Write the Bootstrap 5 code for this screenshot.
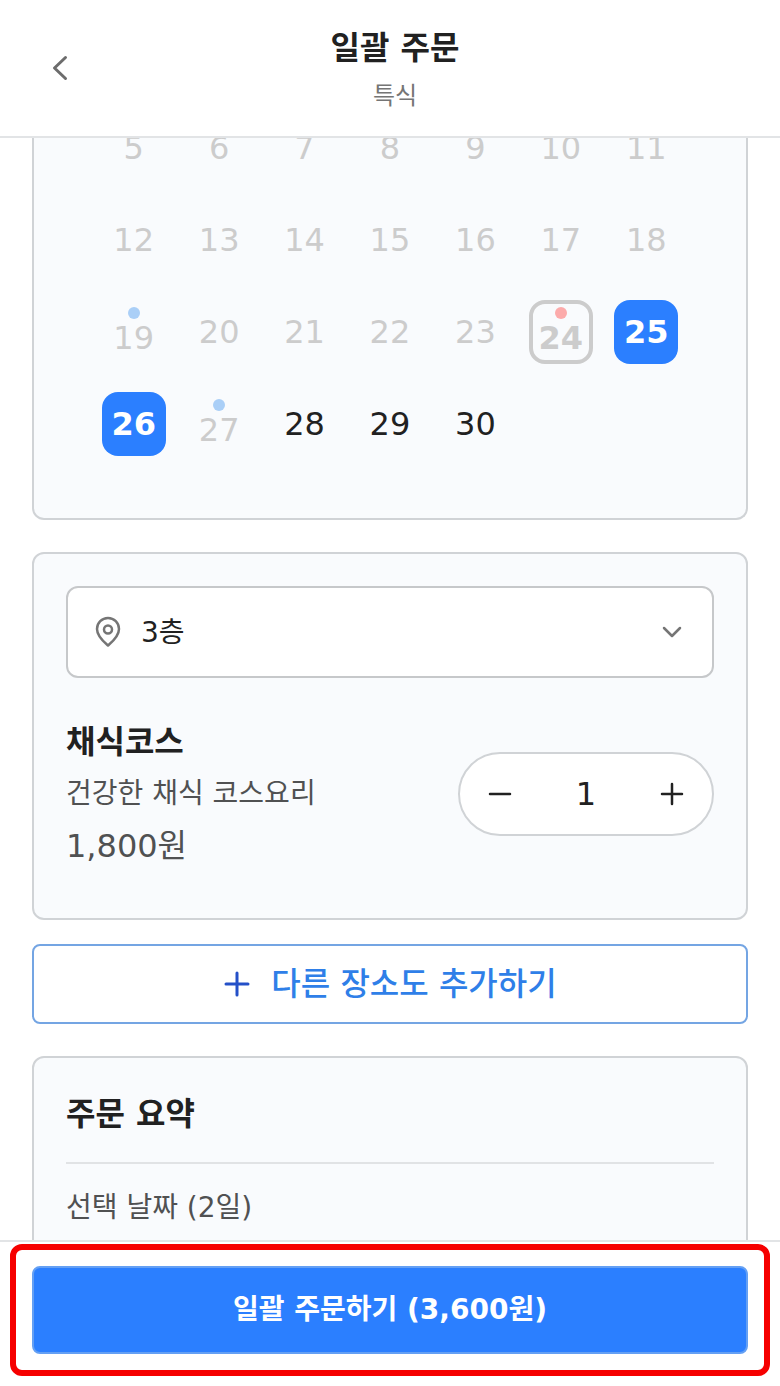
<!DOCTYPE html>
<html lang="ko">
<head>
<meta charset="utf-8">
<meta name="viewport" content="width=device-width, initial-scale=1">
<title>일괄 주문</title>
<link href="https://cdn.jsdelivr.net/npm/bootstrap@5.3.0/dist/css/bootstrap.min.css" rel="stylesheet">
<style>
  body { font-family: "DejaVu Sans", "Noto Sans CJK KR", sans-serif; color: #212121; background: #fff; }
  h1, h2, h3, p { margin: 0; }
  svg { fill: none; stroke: currentColor; stroke-linecap: round; stroke-linejoin: round; flex: none; }
  .t-24 { font-size: 24px; }
  .t-28 { font-size: 28px; }
  .t-32 { font-size: 32px; }
  .lh-row { line-height: 52px; }
  .c-sub { color: #757575; }
  .c-body { color: #505152; }

  .app-header { border-bottom: 2px solid #e2e4e6; padding: 0 30px 0 40px; height: 138px; }
  .app-header h1, .app-header p { line-height: 48px; }
  .titles { padding-top: 8px; }
  .icon-btn { width: 40px; height: 40px; padding: 0; border: 0; background: none; color: #212121; display: flex; align-items: center; justify-content: center; }
  .back-btn { color: #6c6c6c; }

  .app-main { overflow: hidden; min-height: 0; padding: 0 32px; }
  .panel { background: #f9fbfd; border: 2px solid #d0d3d6; border-radius: 12px; padding: 32px; }
  .section-gap { margin-top: 32px; }
  /* the calendar is scrolled partly under the header */
  .calendar { margin-top: -36px; border-top: 0; padding: 0 57px 48px; }
  .calendar table { width: 100%; table-layout: fixed; }
  .calendar td { height: 92px; padding: 0; text-align: center; vertical-align: middle; }
  .day { width: 64px; height: 64px; padding: 0; border: 0; border-radius: 16px; background: none; color: #212121; font-size: 32px; line-height: 38px; display: inline-flex; flex-direction: column; align-items: center; justify-content: center; vertical-align: middle; }
  .day:disabled { color: #ccc; }
  .day.today { border: 4px solid #ccc; font-weight: 700; }
  .day.chosen { background: #2b7fff; color: #fff; font-weight: 700; }
  .dot { width: 12px; height: 12px; border-radius: 50%; background: #aacff7; }
  .dot.red { background: #fcabab; }

  .place { position: relative; height: 92px; background: #fff; border: 2px solid #c6c8ca; border-radius: 12px; color: #757575; }
  .place select { appearance: none; width: 100%; height: 100%; border: 0; border-radius: 12px; background: none; padding: 2px 80px 0 73px; color: #212121; }
  .place svg { position: absolute; top: 50%; transform: translateY(-50%); pointer-events: none; }
  .place .pin { left: 24px; }
  .place .arrow { right: 24px; }
  .product { margin: 38px 0 14px; }
  .stepper { width: 256px; height: 84px; padding: 0 20px; background: #fff; border: 2px solid #d0d3d6; border-radius: 42px; }
  .add-btn { height: 80px; border: 2px solid #74a5e3; border-radius: 8px; background: #fff; color: #2f7fe8; gap: 20px; font-weight: 500; }
  .add-btn svg { color: #2450c8; }
  .summary h2 { line-height: 48px; padding-bottom: 24px; border-bottom: 2px solid #e1e3e5; }
  .summary p { line-height: 48px; padding-top: 20px; }

  .app-footer { border-top: 2px solid #e2e4e6; padding: 2px 10px 10px; background: #fff; }
  .callout-frame { border: 6px solid #f60000; border-radius: 12px; padding: 16px; }
  .order-btn { height: 88px; padding: 0; border: 2px solid #64a0f4; border-radius: 8px; background: #2b7fff; color: #fff; font-weight: 700; }
</style>
</head>
<body>
<div class="vh-100 d-flex flex-column">
  <header class="app-header d-flex align-items-center flex-shrink-0">
    <button class="icon-btn back-btn" type="button" aria-label="뒤로">
      <svg width="40" height="40" viewBox="0 0 40 40" stroke-width="3"><path d="M25.500 9.500 14.500 20 25.500 30.500"/></svg>
    </button>
    <div class="titles flex-grow-1 text-center">
      <h1 class="t-32 fw-bold">일괄 주문</h1>
      <p class="t-24 c-sub">특식</p>
    </div>
    <div class="icon-btn" aria-hidden="true"></div>
  </header>

  <main class="app-main flex-grow-1">
    <section class="panel calendar">
      <table>
        <tbody>
          <tr>
            <td><button class="day" type="button" disabled>5</button></td>
            <td><button class="day" type="button" disabled>6</button></td>
            <td><button class="day" type="button" disabled>7</button></td>
            <td><button class="day" type="button" disabled>8</button></td>
            <td><button class="day" type="button" disabled>9</button></td>
            <td><button class="day" type="button" disabled>10</button></td>
            <td><button class="day" type="button" disabled>11</button></td>
          </tr>
          <tr>
            <td><button class="day" type="button" disabled>12</button></td>
            <td><button class="day" type="button" disabled>13</button></td>
            <td><button class="day" type="button" disabled>14</button></td>
            <td><button class="day" type="button" disabled>15</button></td>
            <td><button class="day" type="button" disabled>16</button></td>
            <td><button class="day" type="button" disabled>17</button></td>
            <td><button class="day" type="button" disabled>18</button></td>
          </tr>
          <tr>
            <td><button class="day" type="button" disabled><span class="dot"></span>19</button></td>
            <td><button class="day" type="button" disabled>20</button></td>
            <td><button class="day" type="button" disabled>21</button></td>
            <td><button class="day" type="button" disabled>22</button></td>
            <td><button class="day" type="button" disabled>23</button></td>
            <td><button class="day today" type="button" disabled><span class="dot red"></span>24</button></td>
            <td><button class="day chosen" type="button">25</button></td>
          </tr>
          <tr>
            <td><button class="day chosen" type="button">26</button></td>
            <td><button class="day" type="button" disabled><span class="dot"></span>27</button></td>
            <td><button class="day" type="button">28</button></td>
            <td><button class="day" type="button">29</button></td>
            <td><button class="day" type="button">30</button></td>
            <td></td>
            <td></td>
          </tr>
        </tbody>
      </table>
    </section>

    <section class="panel section-gap">
      <div class="place">
        <svg class="pin" width="32" height="32" viewBox="0 0 32 32" stroke-width="2.500"><path d="M16 29.500C12 26 5 20.500 5 13a11 11 0 0 1 22 0c0 7.500-7 13-11 16.500z"/><circle cx="16" cy="13.500" r="4"/></svg>
        <select class="t-28" aria-label="장소"><option>3층</option></select>
        <svg class="arrow" width="32" height="32" viewBox="0 0 32 32" stroke-width="2.500"><path d="m8 12 8 8 8-8"/></svg>
      </div>
      <div class="product d-flex align-items-center justify-content-between">
        <div>
          <h2 class="t-32 lh-row fw-bold">채식코스</h2>
          <p class="t-28 lh-row c-body">건강한 채식 코스요리</p>
          <p class="t-32 lh-row c-body">1,800원</p>
        </div>
        <div class="stepper d-flex align-items-center justify-content-between">
          <button class="icon-btn" type="button" aria-label="빼기">
            <svg width="32" height="32" viewBox="0 0 32 32" stroke-width="2.500"><path d="M6 16h20"/></svg>
          </button>
          <output class="t-32">1</output>
          <button class="icon-btn" type="button" aria-label="더하기">
            <svg width="32" height="32" viewBox="0 0 32 32" stroke-width="2.500"><path d="M6 16h20M16 6v20"/></svg>
          </button>
        </div>
      </div>
    </section>

    <button class="add-btn t-32 w-100 mt-4 d-flex align-items-center justify-content-center" type="button">
      <svg width="28" height="28" viewBox="0 0 28 28" stroke-width="3"><path d="M3 14h22M14 3v22"/></svg>
      <span>다른 장소도 추가하기</span>
    </button>

    <section class="panel section-gap summary">
      <h2 class="t-32 fw-bold">주문 요약</h2>
      <p class="t-28 c-body">선택 날짜 (2일)</p>
    </section>
  </main>

  <footer class="app-footer flex-shrink-0">
    <div class="callout-frame">
      <button class="order-btn t-28 w-100" type="button">일괄 주문하기 (3,600원)</button>
    </div>
  </footer>
</div>
<script src="https://cdn.jsdelivr.net/npm/bootstrap@5.3.0/dist/js/bootstrap.bundle.min.js"></script>
</body>
</html>
